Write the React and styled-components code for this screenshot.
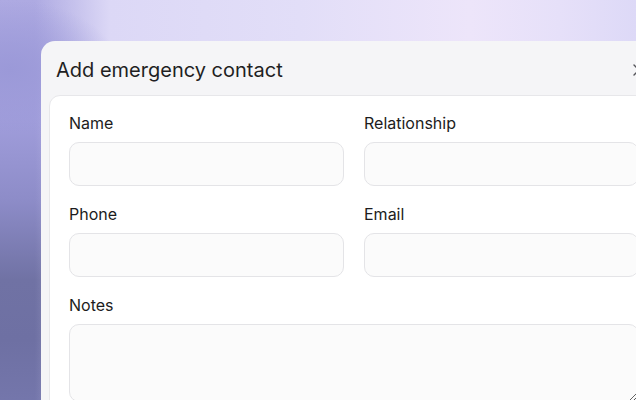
import React from "react";
import styled, { createGlobalStyle } from "styled-components";

const GlobalStyle = createGlobalStyle`
  html, body {
    margin: 0;
    padding: 0;
  }
  body {
    font-family: Inter, "Noto Sans", "Liberation Sans", sans-serif;
    color: #1c1c20;
  }
`;

const Page = styled.div`
  width: 636px;
  height: 400px;
  overflow: hidden;
  padding: 41px 0 0 41px;
  box-sizing: border-box;
  background:
    radial-gradient(ellipse 110px 70px at 10px 70px, #9b99d8 0%, rgba(155, 153, 216, 0) 100%),
    linear-gradient(90deg, rgba(170, 166, 226, 0) 35px, #dcd8f6 110px, #e2def8 300px, #ede5fa 470px, #e6e0f9 560px, #ddd9f7 636px),
    linear-gradient(180deg, #aeaae2 0px, #a09ddb 120px, #8d8cc8 200px, #7072a4 280px, #6e70a3 340px, #7476ab 400px);
  background-color: #8a8ac4;
`;

const Dialog = styled.div`
  width: 640px;
  height: 400px;
  background: #f5f5f7;
  border-top-left-radius: 14px;
  display: flex;
  flex-direction: column;
`;

const Header = styled.div`
  height: 54px;
  display: flex;
  align-items: center;
  justify-content: space-between;
  padding: 3px 0 0 15px;
  box-sizing: border-box;
  flex-shrink: 0;
`;

const Title = styled.h2`
  margin: 0;
  font-size: 20px;
  font-weight: 400;
  color: #1f1f23;
`;

const Close = styled.button`
  border: 0;
  background: none;
  padding: 0;
  margin-right: 35px;
  width: 14px;
  height: 14px;
  display: flex;
  color: #55555a;
`;

const Card = styled.div`
  margin-left: 8px;
  background: #ffffff;
  border: 1px solid #e7e7ea;
  border-top-left-radius: 11px;
  padding: 17px 20px 20px 19px;
  flex: 1;
`;

const Grid = styled.div`
  width: 570px;
  display: grid;
  grid-template-columns: 275px 275px;
  column-gap: 20px;
  row-gap: 18px;
`;

const Field = styled.label`
  display: flex;
  flex-direction: column;
  gap: 9px;
  grid-column: ${(props) => (props.wide ? "1 / span 2" : "auto")};
`;

const Label = styled.span`
  font-size: 16px;
  line-height: 20px;
  color: #1c1c20;
`;

const Input = styled.input`
  box-sizing: border-box;
  height: 44px;
  width: 100%;
  border: 1px solid #e4e4e7;
  border-radius: 10px;
  background: #fbfbfb;
  outline: none;
`;

const TextArea = styled.textarea`
  box-sizing: border-box;
  width: 100%;
  height: 78px;
  border: 1px solid #e4e4e7;
  border-radius: 10px;
  background: #fbfbfb;
  outline: none;
  resize: both;
`;

const CloseIcon = () => (
  <svg width="14" height="14" viewBox="0 0 14 14" fill="none">
    <path d="M2 2 L12 12 M12 2 L2 12" stroke="currentColor" strokeWidth="1.4" strokeLinecap="round" />
  </svg>
);

const App = () => {
  return (
    <>
      <GlobalStyle />
      <Page>
        <Dialog>
          <Header>
            <Title>Add emergency contact</Title>
            <Close aria-label="Close">
              <CloseIcon />
            </Close>
          </Header>
          <Card>
            <Grid>
              <Field>
                <Label>Name</Label>
                <Input />
              </Field>
              <Field>
                <Label>Relationship</Label>
                <Input />
              </Field>
              <Field>
                <Label>Phone</Label>
                <Input />
              </Field>
              <Field>
                <Label>Email</Label>
                <Input />
              </Field>
              <Field wide>
                <Label>Notes</Label>
                <TextArea />
              </Field>
            </Grid>
          </Card>
        </Dialog>
      </Page>
    </>
  );
};

export default App;
